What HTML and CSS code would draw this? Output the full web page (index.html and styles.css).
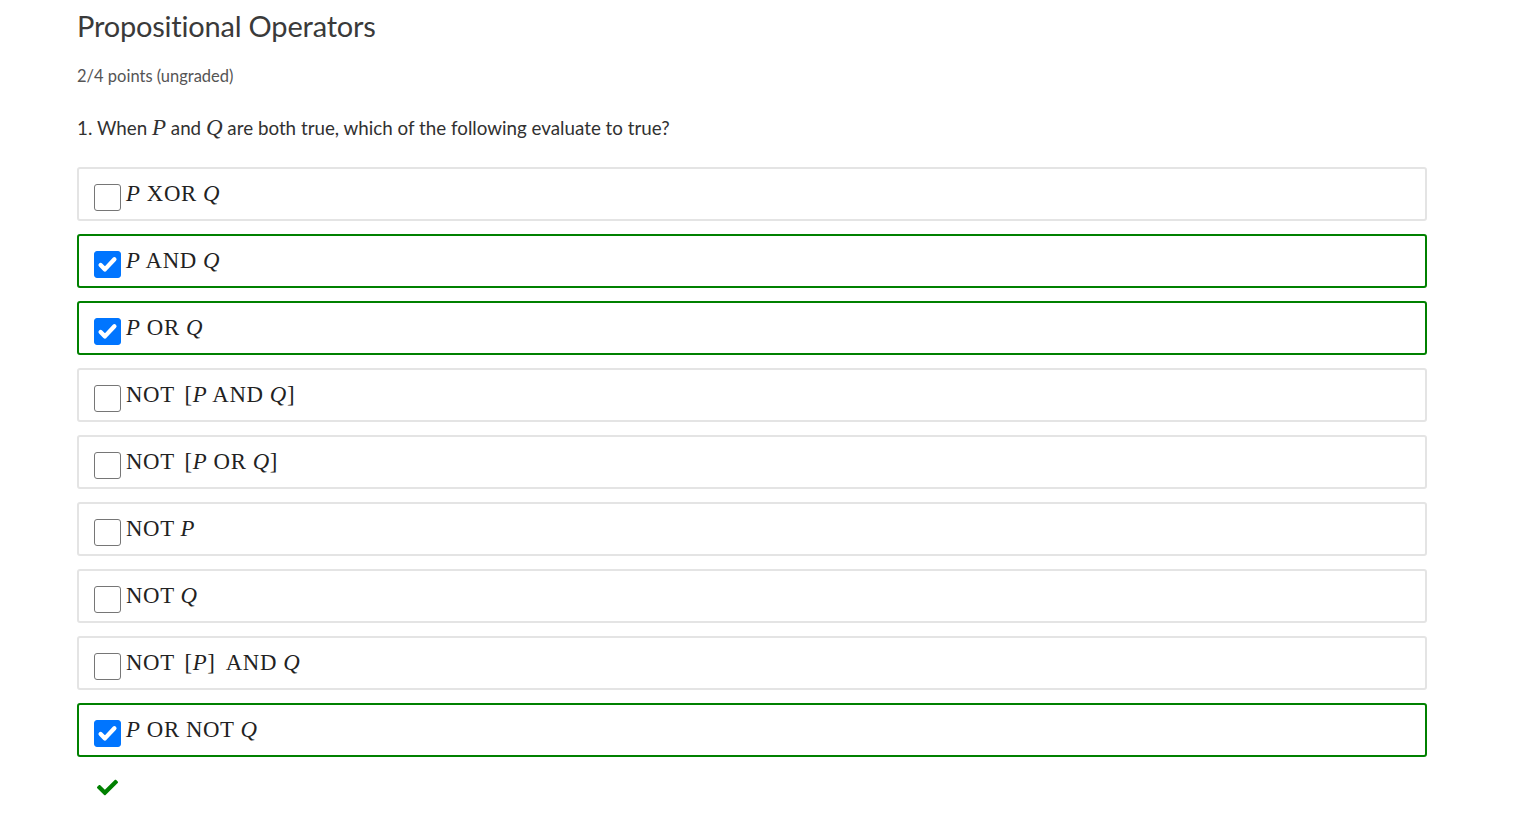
FILE: index.html
```html
<!DOCTYPE html>
<html>
<head>
<meta charset="utf-8">
<link rel="stylesheet" href="styles.css">
</head>
<body>
<div class="page">
  <h2 class="title">Propositional Operators</h2>
  <div class="points">2/4 points (ungraded)</div>
  <p class="question">1. When <span class="mi q-mi">P</span> and <span class="mi q-mi">Q</span> are both true, which of the following evaluate to true?</p>
  <div class="choices">
    <label class="choice">
      <span class="box"></span>
      <span class="math"><span class="mi">P</span> XOR <span class="mi">Q</span></span>
    </label>
    <label class="choice correct">
      <span class="box checked"><svg viewBox="0 0 16 16"><path d="M3.2 8.4l3 3 6.6-7" /></svg></span>
      <span class="math"><span class="mi">P</span> AND <span class="mi">Q</span></span>
    </label>
    <label class="choice correct">
      <span class="box checked"><svg viewBox="0 0 16 16"><path d="M3.2 8.4l3 3 6.6-7" /></svg></span>
      <span class="math"><span class="mi">P</span> OR <span class="mi">Q</span></span>
    </label>
    <label class="choice">
      <span class="box"></span>
      <span class="math">NOT <span class="sp"></span>[<span class="mi">P</span> AND <span class="mi">Q</span>]</span>
    </label>
    <label class="choice">
      <span class="box"></span>
      <span class="math">NOT <span class="sp"></span>[<span class="mi">P</span> OR <span class="mi">Q</span>]</span>
    </label>
    <label class="choice">
      <span class="box"></span>
      <span class="math">NOT <span class="mi">P</span></span>
    </label>
    <label class="choice">
      <span class="box"></span>
      <span class="math">NOT <span class="mi">Q</span></span>
    </label>
    <label class="choice">
      <span class="box"></span>
      <span class="math">NOT <span class="sp"></span>[<span class="mi">P</span>] <span class="sp"></span>AND <span class="mi">Q</span></span>
    </label>
    <label class="choice correct">
      <span class="box checked"><svg viewBox="0 0 16 16"><path d="M3.2 8.4l3 3 6.6-7" /></svg></span>
      <span class="math"><span class="mi">P</span> OR NOT <span class="mi">Q</span></span>
    </label>
  </div>
  <div class="status">
    <svg viewBox="0 0 512 512"><path d="M173.9 439.4l-166.4-166.4c-10-10-10-26.2 0-36.2l36.2-36.2c10-10 26.2-10 36.2 0L192 312.7 432.1 72.6c10-10 26.2-10 36.2 0l36.2 36.2c10 10 10 26.2 0 36.2L210.1 439.4c-10 10-26.2 10-36.2 0z"/></svg>
  </div>
</div>
</body>
</html>
```

FILE: styles.css
```css
* { box-sizing: border-box; }
body {
  margin: 0;
  background: #fff;
  font-family: "Lato", "Open Sans", sans-serif;
  color: #313131;
}
.page {
  width: 1350px;
  margin-left: 77px;
  padding-top: 8px;
}
.title {
  margin: 0;
  font-size: 29px;
  font-weight: 400;
  line-height: 36px;
  color: #3a3a3a;
  letter-spacing: -0.2px;
}
.points {
  margin-top: 22px;
  font-size: 16.5px;
  line-height: 20px;
  color: #555;
}
.question {
  margin: 29px 0 0;
  font-size: 18.8px;
  line-height: 26px;
  color: #313131;
}
.q-mi {
  font-family: "Liberation Serif", "DejaVu Serif", serif;
  font-size: 23px;
}
.choices {
  margin-top: 26px;
  display: flex;
  flex-direction: column;
  gap: 13px;
}
.choice {
  display: flex;
  align-items: center;
  height: 54px;
  border: 2px solid #e4e4e4;
  border-radius: 3px;
  padding-left: 15px;
}
.choice.correct {
  border-color: #008100;
}
.box {
  width: 27px;
  height: 27px;
  border: 1.5px solid #767676;
  border-radius: 3px;
  background: #fff;
  margin-top: 6px;
  margin-right: 5px;
  flex: none;
  display: flex;
  align-items: center;
  justify-content: center;
}
.box.checked {
  background: #0075ff;
  border-color: #0075ff;
}
.box svg {
  width: 23px;
  height: 23px;
  fill: none;
  stroke: #fff;
  stroke-width: 3;
  stroke-linecap: round;
  stroke-linejoin: round;
}
.math {
  font-family: "Liberation Serif", "DejaVu Serif", serif;
  font-size: 22.8px;
  color: #222;
  white-space: pre;
  line-height: 1;
  letter-spacing: 0.6px;
}
.mi { font-style: italic; }
.sp { display: inline-block; width: 4px; }
.status {
  margin-top: 20px;
  padding-left: 20px;
}
.status svg {
  width: 21px;
  height: 21px;
  fill: #008000;
  display: block;
}
```
